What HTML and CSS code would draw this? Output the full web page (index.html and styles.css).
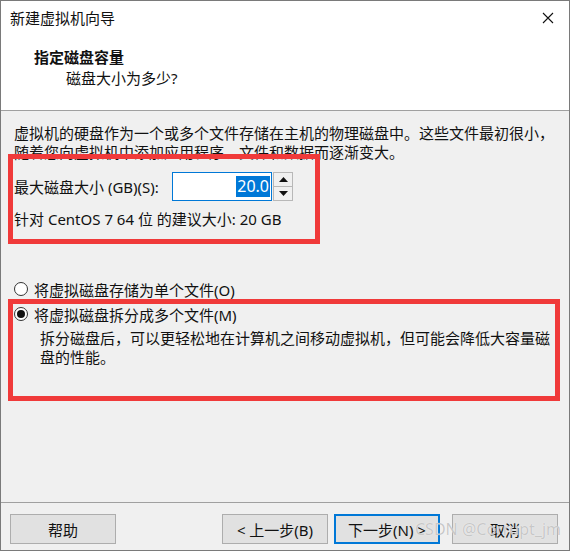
FILE: index.html
```html
<!DOCTYPE html>
<html lang="zh-CN">
<head>
    <meta charset="UTF-8">
    <title>新建虚拟机向导</title>
    <link rel="stylesheet" href="styles.css">
</head>
<body>
    <div class="window">
        <div class="titlebar">
            <span class="title">新建虚拟机向导</span>
            <span class="close-btn">
                <svg width="12" height="12" viewBox="0 0 12 12">
                    <path d="M1 1 L11 11 M11 1 L1 11" stroke="#111" stroke-width="1.1" fill="none"/>
                </svg>
            </span>
        </div>

        <div class="header">
            <div class="header-title">指定磁盘容量</div>
            <div class="header-sub">磁盘大小为多少?</div>
        </div>

        <main class="content">
            <p class="intro">虚拟机的硬盘作为一个或多个文件存储在主机的物理磁盘中。这些文件最初很小，<br>随着您向虚拟机中添加应用程序、文件和数据而逐渐变大。</p>

            <div class="size-row">
                <label class="size-label">最大磁盘大小 (GB)(S):</label>
                <div class="spin">
                    <div class="spin-input"><span class="selected">20.0</span></div>
                    <div class="spin-btns">
                        <span class="spin-btn"><svg width="9" height="5" viewBox="0 0 9 5"><path d="M0 5 L4.5 0 L9 5 Z" fill="#111"/></svg></span>
                        <span class="spin-btn"><svg width="9" height="5" viewBox="0 0 9 5"><path d="M0 0 L4.5 5 L9 0 Z" fill="#111"/></svg></span>
                    </div>
                </div>
            </div>

            <div class="recommend">针对 CentOS 7 64 位 的建议大小: 20 GB</div>

            <div class="options">
                <div class="radio-row">
                    <span class="radio"></span>
                    <span>将虚拟磁盘存储为单个文件(O)</span>
                </div>
                <div class="radio-row">
                    <span class="radio checked"></span>
                    <span>将虚拟磁盘拆分成多个文件(M)</span>
                </div>
                <p class="option-desc">拆分磁盘后，可以更轻松地在计算机之间移动虚拟机，但可能会降低大容量磁<br>盘的性能。</p>
            </div>
        </main>

        <footer class="footer">
            <button class="btn">帮助</button>
            <div class="footer-right">
                <button class="btn">&lt; 上一步(B)</button>
                <button class="btn btn-default">下一步(N) &gt;</button>
                <button class="btn btn-cancel">取消</button>
            </div>
        </footer>

        <!-- annotations drawn over the dialog -->
        <div class="mark mark-size"></div>
        <div class="mark mark-split"></div>
        <div class="watermark">CSDN @Corrupt_jm</div>
    </div>
</body>
</html>
```

FILE: styles.css
```css
* {
    margin: 0;
    padding: 0;
    box-sizing: border-box;
}

body {
    font-family: "Noto Sans", "Noto Sans CJK SC", sans-serif;
    font-size: 15px;
    color: #111;
    background: #fff;
}

.window {
    position: relative;
    width: 570px;
    height: 551px;
    border: 1px solid #7a7a7a;
    display: flex;
    flex-direction: column;
    background: #f0f0f0;
    overflow: hidden;
}

.titlebar {
    height: 34px;
    background: #fff;
    display: flex;
    align-items: center;
    justify-content: space-between;
    padding: 0 15px 0 9px;
}

.title {
    line-height: 34px;
}

.close-btn {
    display: flex;
}

.header {
    height: 76px;
    background: #fff;
    border-bottom: 1px solid #a0a0a0;
    padding: 12px 0 0 33px;
}

.header-title {
    font-weight: bold;
    line-height: 20px;
}

.header-sub {
    line-height: 22px;
    padding-left: 32px;
}

.content {
    flex: 1;
    padding: 13px 14px 0 13px;
}

.intro {
    line-height: 19px;
}

.size-row {
    display: flex;
    align-items: center;
    margin-top: 10px;
    height: 29px;
}

.size-label {
    width: 158px;
}

.spin {
    display: flex;
    height: 29px;
}

.spin-input {
    width: 100px;
    height: 29px;
    background: #fff;
    border: 1px solid #0078d7;
    display: flex;
    align-items: center;
    justify-content: flex-end;
    padding-right: 1px;
    font-size: 16px;
}

.selected {
    background: #0078d7;
    color: #fff;
    line-height: 21px;
    padding: 0 1px;
}

.spin-btns {
    display: flex;
    flex-direction: column;
    width: 20px;
    margin-left: 1px;
}

.spin-btn {
    flex: 1;
    display: flex;
    align-items: center;
    justify-content: center;
    background: #f0f0f0;
    border: 1px solid #b8b8b8;
}

.spin-btn + .spin-btn {
    border-top: none;
}

.recommend {
    line-height: 19px;
    margin-top: 9px;
}

.options {
    margin-top: 49px;
}

.radio-row {
    display: flex;
    align-items: center;
    height: 22px;
    gap: 6px;
}

.radio-row + .radio-row {
    margin-top: 3px;
}

.radio {
    width: 14px;
    height: 14px;
    border-radius: 50%;
    border: 1px solid #333;
    background: #fff;
    position: relative;
    margin-left: 0;
}

.radio.checked::after {
    content: "";
    position: absolute;
    left: 2px;
    top: 2px;
    width: 8px;
    height: 8px;
    border-radius: 50%;
    background: #111;
}

.option-desc {
    line-height: 19px;
    margin-top: 4px;
    padding-left: 26px;
}

.footer {
    height: 48px;
    border-top: 1px solid #a0a0a0;
    display: flex;
    justify-content: space-between;
    padding: 11px 11px 0 9px;
}

.footer-right {
    display: flex;
    gap: 6px;
}

.btn {
    width: 106px;
    height: 30px;
    background: #e1e1e1;
    border: 1px solid #adadad;
    font-family: inherit;
    font-size: 15px;
    color: #111;
}

.btn-default {
    border: 2px solid #0078d7;
}

.btn-cancel {
    margin-left: 6px;
}

.mark {
    position: absolute;
    border: 5px solid #f03a3a;
}

.mark-size {
    left: 7px;
    top: 153px;
    width: 312px;
    height: 90px;
}

.mark-split {
    left: 7px;
    top: 298px;
    width: 552px;
    height: 102px;
}

.watermark {
    position: absolute;
    left: 414px;
    top: 517px;
    font-size: 16px;
    color: rgba(190, 190, 190, 0.85);
    text-shadow: 0 0 1px #fff;
}
```
